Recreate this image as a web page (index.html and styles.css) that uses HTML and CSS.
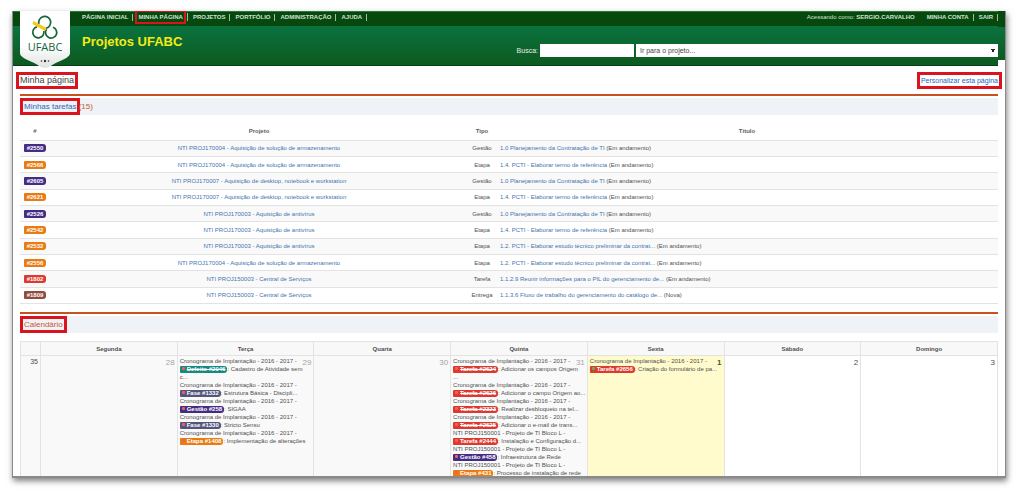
FILE: index.html
```html
<!DOCTYPE html>
<html lang="pt-BR">
<head>
<meta charset="utf-8">
<title>Projetos UFABC</title>
<link rel="stylesheet" href="styles.css">
</head>
<body>
<div class="window">
  <header class="header">
    <a class="logo" href="#" aria-label="UFABC">
      <svg class="logo-shape" viewBox="0 0 50 57" aria-hidden="true">
        <defs><linearGradient id="shield" x1="0" y1="0" x2="0" y2="1"><stop offset=".6" stop-color="#fff"/><stop offset="1" stop-color="#dfe3e1"/></linearGradient></defs>
        <path d="M0 0H50V42C50 46 44 48 38 51C33 53 29 57 25 57C21 57 17 53 12 51C6 48 0 46 0 42Z" fill="url(#shield)"/>
        <g fill="none" stroke="#17663a" stroke-width="1.7">
          <path d="M18.900 13A6 6 0 1 1 26 17.300"/>
          <path d="M17 15.800A5.600 5.600 0 1 0 23.800 20"/>
          <path d="M26.500 18.300A5.600 5.600 0 1 0 33 16.200"/>
        </g>
        <path d="M13.500 10L26.500 17L25 20L12.500 13Z" fill="#f5c916"/>
        <g fill="#333"><circle cx="21.500" cy="50" r=".8"/><circle cx="25" cy="50" r="1.200"/><circle cx="28.500" cy="50" r=".8"/></g>
      </svg>
      <span class="logo-text">UFABC</span>
    </a>
    <div class="header-main">
      <div class="topbar">
        <nav class="nav">
          <a href="#">PÁGINA INICIAL</a><a href="#"><span class="mark mark-nav">MINHA PÁGINA</span></a><a href="#">PROJETOS</a><a href="#">PORTFÓLIO</a><a href="#">ADMINISTRAÇÃO</a><a href="#">AJUDA</a>
        </nav>
        <div class="account">
          <span class="user">Acessando como: <b>SERGIO.CARVALHO</b></span>
          <nav class="nav"><a href="#">MINHA CONTA</a><a href="#">SAIR</a></nav>
        </div>
      </div>
      <div class="banner">
        <h1 class="site-title">Projetos UFABC</h1>
        <form class="search">
          <label for="q">Busca:</label>
          <input id="q" type="text">
          <select aria-label="Ir para o projeto"><option>Ir para o projeto...</option></select>
        </form>
      </div>
    </div>
    <div class="header-edge"></div>
  </header>

  <main class="content">
    <div class="page-head">
      <h2 class="page-title"><span class="mark">Minha página</span></h2>
      <a class="mark customize" href="#">Personalizar esta página</a>
    </div>

    <section class="block">
      <h3 class="block-title"><a class="mark" href="#">Minhas tarefas</a> (15)</h3>
      <table class="issues">
        <thead><tr><th class="c-id">#</th><th class="c-project">Projeto</th><th class="c-type">Tipo</th><th>Título</th></tr></thead>
        <tbody>
          <tr><td><a class="tag purple" href="#">#2550</a></td><td><a href="#">NTI PROJ170004 - Aquisição de solução de armazenamento</a></td><td>Gestão</td><td><a href="#">1.0 Planejamento da Contratação de TI</a> (Em andamento)</td></tr>
          <tr><td><a class="tag orange" href="#">#2566</a></td><td><a href="#">NTI PROJ170004 - Aquisição de solução de armazenamento</a></td><td>Etapa</td><td><a href="#">1.4. PCTI - Elaborar termo de referência</a> (Em andamento)</td></tr>
          <tr><td><a class="tag purple" href="#">#2605</a></td><td><a href="#">NTI PROJ170007 - Aquisição de desktop, notebook e workstation</a></td><td>Gestão</td><td><a href="#">1.0 Planejamento da Contratação de TI</a> (Em andamento)</td></tr>
          <tr><td><a class="tag orange" href="#">#2621</a></td><td><a href="#">NTI PROJ170007 - Aquisição de desktop, notebook e workstation</a></td><td>Etapa</td><td><a href="#">1.4. PCTI - Elaborar termo de referência</a> (Em andamento)</td></tr>
          <tr><td><a class="tag purple" href="#">#2526</a></td><td><a href="#">NTI PROJ170003 - Aquisição de antivírus</a></td><td>Gestão</td><td><a href="#">1.0 Planejamento da Contratação de TI</a> (Em andamento)</td></tr>
          <tr><td><a class="tag orange" href="#">#2542</a></td><td><a href="#">NTI PROJ170003 - Aquisição de antivírus</a></td><td>Etapa</td><td><a href="#">1.4. PCTI - Elaborar termo de referência</a> (Em andamento)</td></tr>
          <tr><td><a class="tag orange" href="#">#2532</a></td><td><a href="#">NTI PROJ170003 - Aquisição de antivírus</a></td><td>Etapa</td><td><a href="#">1.2. PCTI - Elaborar estudo técnico preliminar da contrat...</a> (Em andamento)</td></tr>
          <tr><td><a class="tag orange" href="#">#2556</a></td><td><a href="#">NTI PROJ170004 - Aquisição de solução de armazenamento</a></td><td>Etapa</td><td><a href="#">1.2. PCTI - Elaborar estudo técnico preliminar da contrat...</a> (Em andamento)</td></tr>
          <tr><td><a class="tag red" href="#">#1802</a></td><td><a href="#">NTI PROJ150003 - Central de Serviços</a></td><td>Tarefa</td><td><a href="#">1.1.2.9 Reunir informações para o PIL do gerenciamento de...</a> (Em andamento)</td></tr>
          <tr><td><a class="tag brown" href="#">#1809</a></td><td><a href="#">NTI PROJ150003 - Central de Serviços</a></td><td>Entrega</td><td><a href="#">1.1.3.6 Fluxo de trabalho do gerenciamento do catálogo de...</a> (Nova)</td></tr>
        </tbody>
      </table>
    </section>

    <section class="block">
      <h3 class="block-title"><span class="mark">Calendário</span></h3>
      <table class="calendar">
        <thead><tr><th class="c-week"></th><th>Segunda</th><th>Terça</th><th>Quarta</th><th>Quinta</th><th>Sexta</th><th>Sábado</th><th>Domingo</th></tr></thead>
        <tbody><tr>
          <td class="week">35</td>
          <td class="past"><span class="day">28</span></td>
          <td class="past"><span class="day">29</span>
            <div class="event">Cronograma de Implantação - 2016 - 2017 -<br><a class="tag teal done" href="#"><i class="dot"></i>Defeito #2046</a>: Cadastro de Atividade sem<br>c...</div>
            <div class="event">Cronograma de Implantação - 2016 - 2017 -<br><a class="tag slate" href="#"><i class="dot"></i>Fase #1332</a>: Estrutura Básica - Discipli...</div>
            <div class="event">Cronograma de Implantação - 2016 - 2017 -<br><a class="tag purple" href="#"><i class="dot"></i>Gestão #258</a>: SIGAA</div>
            <div class="event">Cronograma de Implantação - 2016 - 2017 -<br><a class="tag slate" href="#"><i class="dot"></i>Fase #1330</a>: Stricto Sensu</div>
            <div class="event">Cronograma de Implantação - 2016 - 2017 -<br><a class="tag orange" href="#"><i class="dot"></i>Etapa #1408</a>: Implementação de alterações</div>
          </td>
          <td class="past"><span class="day">30</span></td>
          <td class="past"><span class="day">31</span>
            <div class="event">Cronograma de Implantação - 2016 - 2017 -<br><a class="tag red done" href="#"><i class="dot"></i>Tarefa #2624</a>: Adicionar os campos Origem<br>...</div>
            <div class="event">Cronograma de Implantação - 2016 - 2017 -<br><a class="tag red done" href="#"><i class="dot"></i>Tarefa #2626</a>: Adicionar o campo Origem ao...</div>
            <div class="event">Cronograma de Implantação - 2016 - 2017 -<br><a class="tag red done" href="#"><i class="dot"></i>Tarefa #2323</a>: Realizar desbloqueio na tel...</div>
            <div class="event">Cronograma de Implantação - 2016 - 2017 -<br><a class="tag red done" href="#"><i class="dot"></i>Tarefa #2625</a>: Adicionar o e-mail de trans...</div>
            <div class="event">NTI PROJ150001 - Projeto de TI Bloco L -<br><a class="tag red" href="#"><i class="dot"></i>Tarefa #2444</a>: Instalação e Configuração d...</div>
            <div class="event">NTI PROJ150001 - Projeto de TI Bloco L -<br><a class="tag purple" href="#"><i class="dot"></i>Gestão #458</a>: Infraestrutura de Rede</div>
            <div class="event">NTI PROJ150001 - Projeto de TI Bloco L -<br><a class="tag orange" href="#"><i class="dot"></i>Etapa #431</a>: Processo de instalação de rede</div>
          </td>
          <td class="today"><span class="day">1</span>
            <div class="event">Cronograma de Implantação - 2016 - 2017 -<br><a class="tag red" href="#"><i class="dot start"></i>Tarefa #2656</a>: Criação do formulário de pa...</div>
          </td>
          <td><span class="day">2</span></td>
          <td><span class="day">3</span></td>
        </tr></tbody>
      </table>
    </section>
  </main>
</div>
</body>
</html>
```
FILE: styles.css
```css
* { box-sizing: border-box; }
body {
  margin: 0;
  height: 100vh;
  padding: 11px 18px 18px 12px;
  display: flex;
  background: #fff;
  color: #505050;
  font: 7px/8px "Liberation Sans", Arial, sans-serif;
}
a { color: #4573b0; text-decoration: none; }
h1, h2, h3 { margin: 0; font-weight: normal; }

.window {
  flex: 1;
  min-width: 0;
  overflow: hidden;
  background: #fff;
  border: solid #8a8a8a;
  border-width: 0 1px 2px;
  box-shadow: 1px 3px 6px rgba(0, 0, 0, .5);
}

.header { position: relative; display: flex; align-items: flex-start; }
.header-main { flex: 1; border-bottom: 1px solid #06401a; }
.header-edge {
  width: 7px;
  height: 49px;
  background: linear-gradient(#07480f 16px, #0a7340 16px, #0d5a1f);
}
.topbar {
  display: flex;
  justify-content: space-between;
  height: 15px;
  padding-left: 69px;
  border-top: 1px solid #2c7a38;
  background: #07480f;
  color: #cfe3cf;
  font-size: 6px;
}
.nav { display: flex; align-items: center; height: 10px; font-weight: bold; }
.nav a { color: #cfe3cf; padding-right: 4px; margin-right: 5px; border-right: 1px solid #9dbf9d; line-height: 7px; }
.account { display: flex; }
.user { line-height: 10px; margin-right: 12px; }
.account .nav a:last-child { margin-right: 0; }
.banner {
  display: flex;
  justify-content: space-between;
  height: 39px;
  padding-left: 69px;
  background: linear-gradient(#0a7340, #0d5a1f);
}
.site-title { padding-top: 8px; color: #f6ea15; font-size: 13px; line-height: 16px; font-weight: bold; }
.search { display: flex; align-items: center; gap: 2px; width: 54%; height: 13px; margin-top: 18px; }
.search label { flex: 1; text-align: right; color: #e4f0e4; }
.search input, .search select {
  flex: none;
  height: 13px;
  border: 0;
  border-radius: 0;
  background: #fff;
  color: #444;
  font: 7px/13px "Liberation Sans", Arial, sans-serif;
  padding: 0 4px;
}
.search input { width: 94px; }
.search select {
  width: 362px;
  appearance: none;
  background: linear-gradient(to bottom left, #222 50%, transparent 50%) right 5px center / 2px 4px no-repeat,
    linear-gradient(to bottom right, #222 50%, transparent 50%) right 3px center / 2px 4px no-repeat, #fff;
}
.logo { position: absolute; left: 7px; top: 0; width: 50px; height: 57px; }
.logo-shape { position: absolute; left: 0; top: 0; width: 100%; height: 100%; }
.logo-text {
  position: absolute;
  left: 0;
  right: 0;
  top: 30px;
  text-align: center;
  color: #17663a;
  font: 500 11px/12px "Open Sans", sans-serif;
}

.mark { display: inline-block; line-height: 9px; outline: 3px solid #d9141e; outline-offset: 1px; }
.nav .mark-nav { line-height: 8px; outline-width: 2px; }

.content { padding: 8px 7px 0; }
.page-head { display: flex; justify-content: space-between; align-items: center; height: 12px; }
.page-title { color: #444; font-size: 9px; line-height: 12px; }
.customize { color: #2a5fc0; }
.block { margin-top: 8px; border-top: 2px solid #c9501f; }
.block-title {
  height: 17px;
  margin-top: 2px;
  padding: 4px 4px;
  background: #eff2f6;
  color: #c9582c;
  font-size: 8px;
  line-height: 9px;
}
.block-title a { color: #3465b8; }

table { width: 100%; table-layout: fixed; border-collapse: collapse; font-size: 6px; }
th { padding: 0; font-weight: bold; }
.issues { height: 182px; margin-top: 7px; }
.issues th { height: 18px; color: #606060; }
.issues td { height: 16px; padding: 0; border: solid #e3e3e3; border-width: 1px 0; text-align: center; }
.issues td:last-child { text-align: left; padding-left: 4px; }
.issues tbody tr:nth-child(odd) { background: #f9f9f9; }
.c-id { width: 30px; }
.c-project { width: 418px; }
.c-type { width: 28px; }

.tag {
  display: inline-block;
  padding: 0 3px;
  border-radius: 1px 3px 3px 1px;
  color: #fff;
  line-height: 7px;
  font-weight: bold;
}
.issues .tag { line-height: 8px; }
.event .tag { padding: 0 2px; }
.purple { background: #442c85; }
.orange { background: #e87b12; }
.red { background: #dc3a2f; }
.brown { background: #8f4c3f; }
.teal { background: #158a83; }
.slate { background: #54557d; }
.done { text-decoration: line-through; }

.calendar { margin-top: 8px; }
.calendar th, .calendar td { border: 1px solid #e3e3e3; }
.calendar th { height: 14px; background: #f8f8f8; }
.calendar td { height: 122px; padding: 1px 2px 0; vertical-align: top; }
.calendar .past, .calendar .week { background: #f9f9f9; }
.calendar .today { background: #fffbcc; }
.c-week { width: 20px; }
.calendar .week { text-align: right; font-size: 7px; line-height: 10px; }
.day { float: right; color: #505050; font-size: 8px; line-height: 12px; }
.past .day { color: #a5a5a5; }
.today .day { font-weight: bold; }
.event { line-height: 8px; white-space: nowrap; }
.dot { display: inline-block; width: 3px; height: 3px; margin-right: 2px; background: #ff5a4a; border-radius: 1px; vertical-align: 1px; }
.dot.start { background: #58b947; }
```
